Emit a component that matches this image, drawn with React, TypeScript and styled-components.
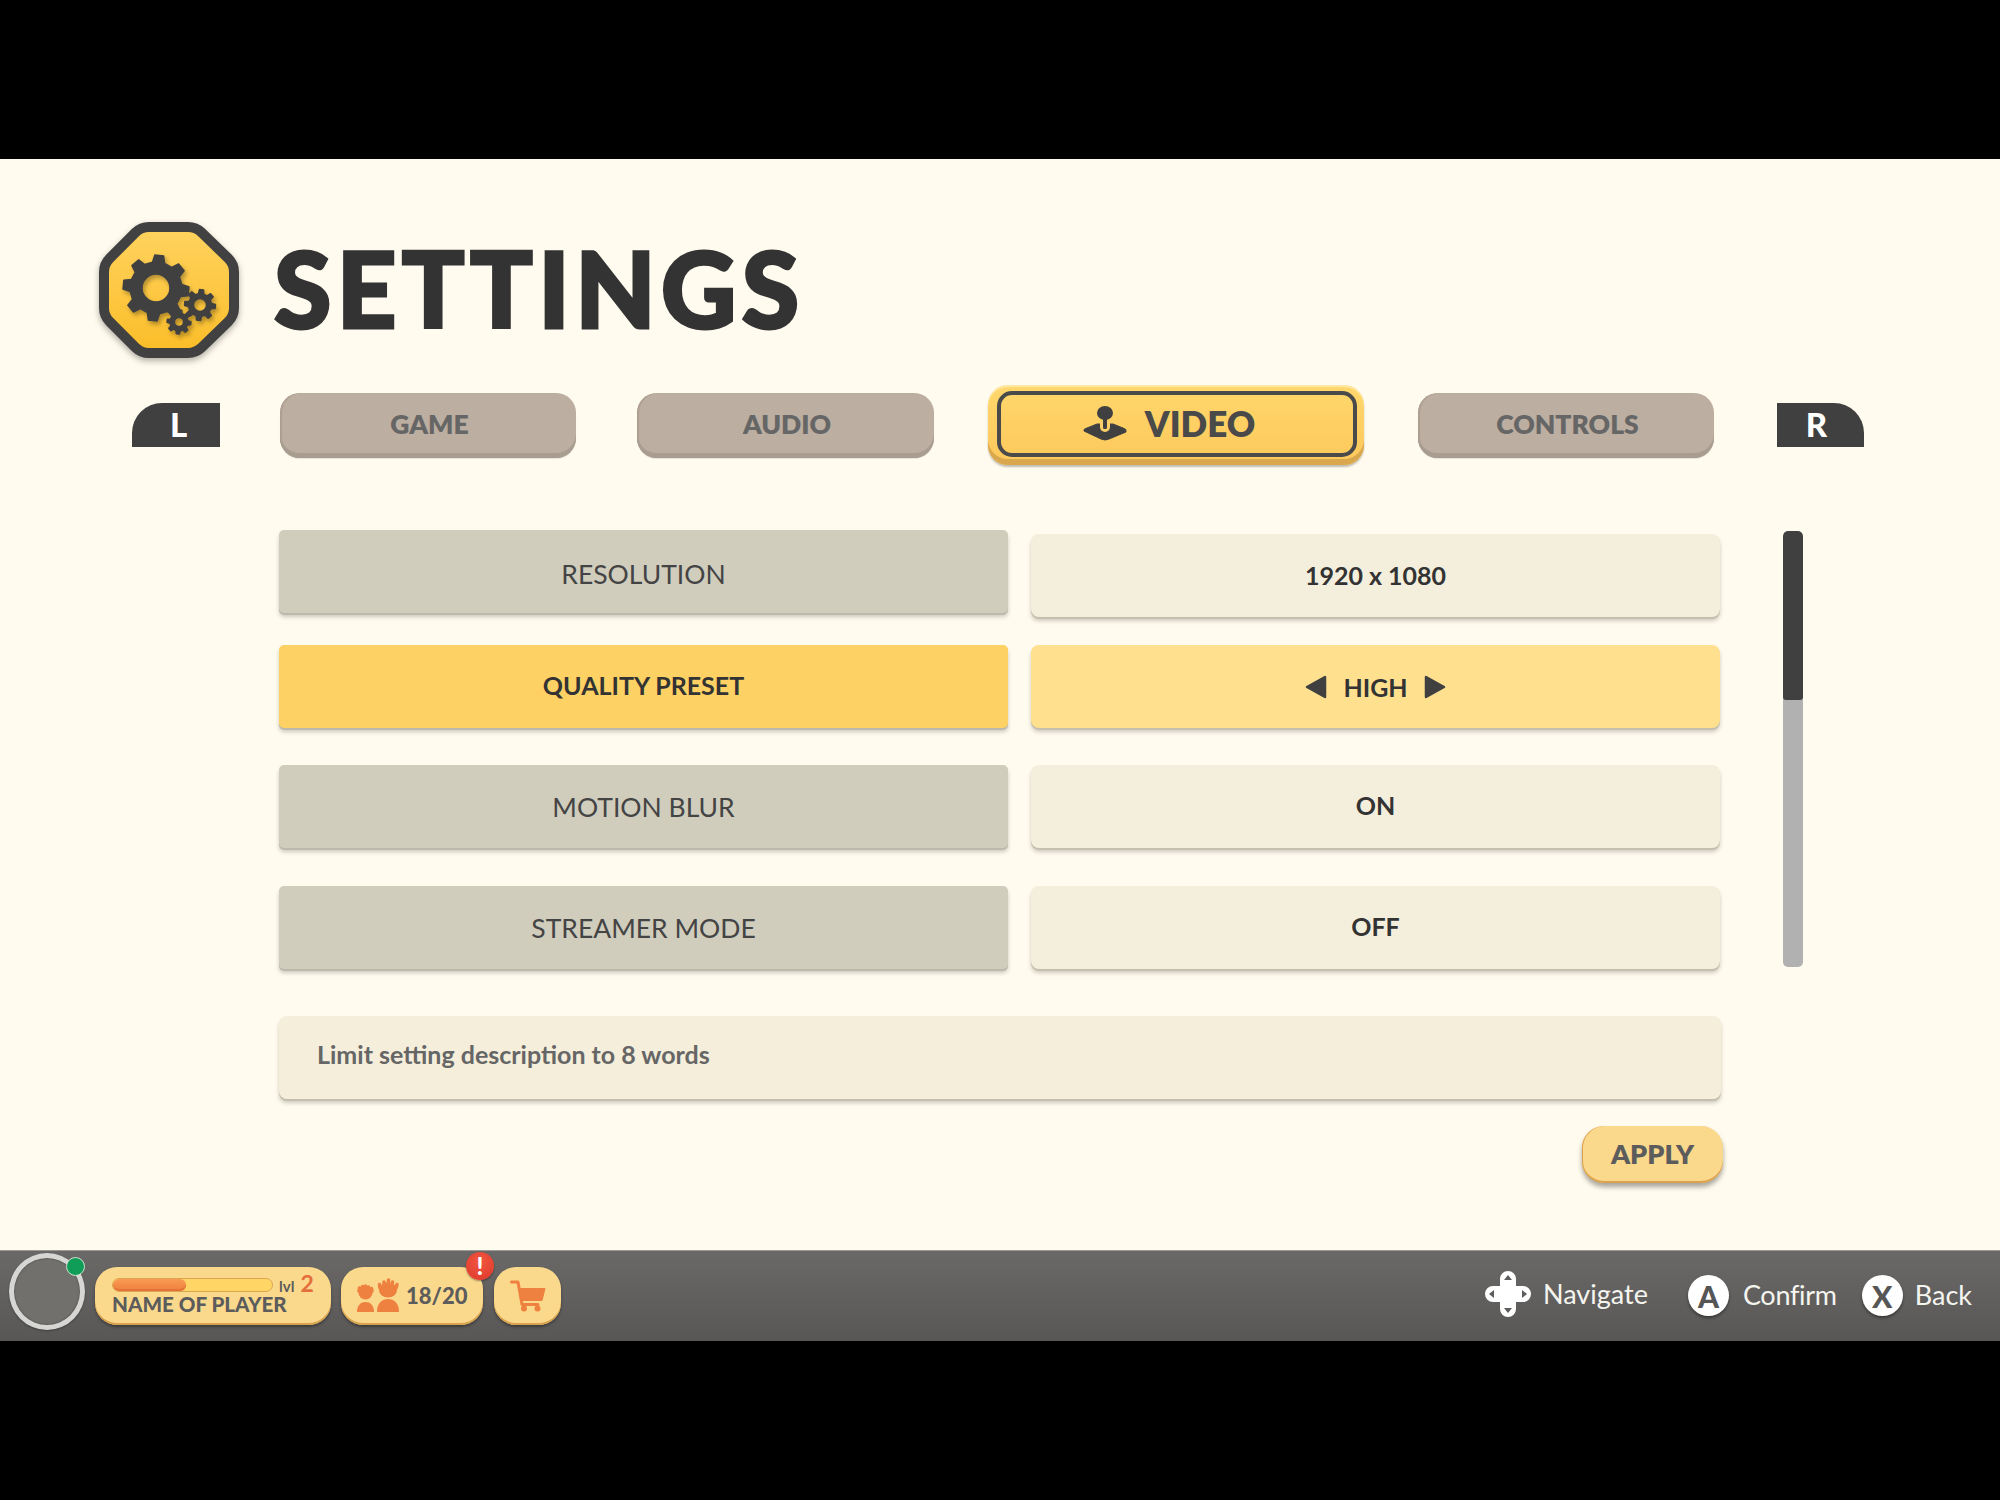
import React from "react";
import styled, { createGlobalStyle } from "styled-components";

const Global = createGlobalStyle`
  html, body { margin: 0; padding: 0; background: #000; }
  body { font-family: "Lato", "Noto Sans", sans-serif; }
  #root { width: 2000px; height: 1500px; }
`;

const Page = styled.div`
  width: 2000px;
  height: 1500px;
  padding-top: 159px;
  box-sizing: border-box;
  background: #000;
`;
const Screen = styled.div`
  width: 2000px;
  height: 1182px;
  background: #fffbee;
  display: flex;
  flex-direction: column;
`;
const Main = styled.main`
  flex: 1;
  display: flex;
  flex-direction: column;
`;
const Header = styled.header`
  display: flex;
  align-items: center;
  height: 136px;
  margin-top: 63px;
  padding-left: 98px;
  gap: 35px;
`;
const LogoSvg = styled.svg`
  width: 141px;
  height: 136px;
  overflow: visible;
  filter: drop-shadow(0 3px 3px rgba(0, 0, 0, 0.3));
`;
const Title = styled.h1`
  margin: 0 0 5px;
  font-size: 104px;
  line-height: 1;
  font-weight: 900;
  color: #333;
  letter-spacing: 5.4px;
  -webkit-text-stroke: 3px #333;
`;
const TabsRow = styled.nav`
  display: flex;
  align-items: center;
  height: 80px;
  margin-top: 27px;
  padding-left: 132px;
`;
const Bumper = styled.div<{ $side: "l" | "r"; $offset?: number }>`
  width: ${(p) => (p.$side === "l" ? 88 : 87)}px;
  height: 44px;
  margin-left: ${(p) => p.$offset ?? 0}px;
  background: #404040;
  color: #fff;
  display: flex;
  align-items: center;
  justify-content: center;
  font-size: 33px;
  font-weight: 900;
  border-top-left-radius: ${(p) => (p.$side === "l" ? 30 : 0)}px;
  border-top-right-radius: ${(p) => (p.$side === "r" ? 30 : 0)}px;
  padding: ${(p) => (p.$side === "l" ? "0 0 2px 5px" : "0 8px 2px 0")};
  box-sizing: border-box;
`;
const Tab = styled.button<{ $w: number; $offset: number }>`
  width: ${(p) => p.$w}px;
  height: 65px;
  margin-left: ${(p) => p.$offset}px;
  border: none;
  border-radius: 20px;
  background: #bcaea0;
  box-shadow: inset 0 -5px 0 #a89d90, inset 2px 0 1px #ad9f92, 0 1px 1px rgba(0, 0, 0, 0.1);
  color: #666;
  font-family: inherit;
  font-size: 26.5px;
  font-weight: 800;
  padding: 0 0 2px 3px;
`;
const ActiveTab = styled.button<{ $offset: number }>`
  width: 376px;
  height: 80px;
  margin-left: ${(p) => p.$offset}px;
  padding: 6px 7px 8px 9px;
  box-sizing: border-box;
  border: none;
  border-radius: 20px;
  background: linear-gradient(#ffd76c, #fdc85b);
  box-shadow: inset 0 -6px 0 #d9a84e, inset 0 2px 1px #ffe9a8, 0 2px 2px rgba(0, 0, 0, 0.25);
  font-family: inherit;
`;
const ActiveInner = styled.span`
  display: flex;
  align-items: center;
  justify-content: center;
  gap: 18px;
  height: 100%;
  box-sizing: border-box;
  border: 4px solid #4a4a4a;
  border-radius: 15px;
  color: #4a4a4a;
  font-size: 35px;
  font-weight: 800;
  padding: 0 16px 2px 0;
`;
const Body = styled.section`
  display: flex;
  align-items: flex-start;
  margin-top: 65px;
  padding-left: 279px;
`;
const Table = styled.div`
  width: 1444px;
  display: flex;
  flex-direction: column;
`;
const Row = styled.div<{ $mt: number }>`
  display: grid;
  grid-template-columns: 729px 689px;
  grid-template-rows: 83px;
  align-items: start;
  column-gap: 23px;
  height: 83px;
  margin-top: ${(p) => p.$mt}px;
`;
const Label = styled.div<{ $on?: boolean; $pt: number }>`
  display: flex;
  align-items: center;
  justify-content: center;
  height: 83px;
  border-radius: 5px;
  background: ${(p) => (p.$on ? "#fdd163" : "#d0cdbd")};
  color: ${(p) => (p.$on ? "#333" : "#444")};
  font-size: ${(p) => (p.$on ? 25 : 26.5)}px;
  font-weight: ${(p) => (p.$on ? 700 : 400)};
  padding-top: ${(p) => p.$pt}px;
  padding-bottom: ${(p) => (p.$on ? 3 : 0)}px;
  box-sizing: border-box;
  box-shadow: 0 2px 0 #bdbaac, 0 4px 4px rgba(0, 0, 0, 0.2);
`;
const Value = styled.div<{ $on?: boolean; $top?: number; $pb: number }>`
  display: flex;
  align-items: center;
  justify-content: center;
  gap: 16px;
  height: 83px;
  box-sizing: border-box;
  margin-top: ${(p) => p.$top ?? 0}px;
  padding-bottom: ${(p) => p.$pb}px;
  border-radius: 8px;
  background: ${(p) => (p.$on ? "#ffe08f" : "#f4efdc")};
  color: #333;
  font-size: 25px;
  font-weight: 700;
  box-shadow: 0 2px 0 #c4bfae, 0 4px 4px rgba(0, 0, 0, 0.2);
`;
const Description = styled.div`
  height: 83px;
  margin-top: 47px;
  width: 1442px;
  display: flex;
  align-items: center;
  padding: 0 0 7px 38px;
  box-sizing: border-box;
  border-radius: 8px;
  background: #f4eedb;
  color: #666;
  font-size: 25px;
  font-weight: 700;
  box-shadow: 0 2px 0 #c4bfae, 0 4px 4px rgba(0, 0, 0, 0.2);
`;
const Apply = styled.button`
  align-self: flex-end;
  width: 141px;
  height: 57px;
  margin-top: 27px;
  border: none;
  border-radius: 22px;
  background: #fbd98c;
  box-shadow: inset 0 -2px 0 #dfa24c, inset 1px 0 0 #dfa24c, 0 4px 5px rgba(0, 0, 0, 0.35);
  color: #5c5c5c;
  font-family: inherit;
  font-size: 27px;
  font-weight: 800;
  padding: 0 0 2px;
`;
const ScrollTrack = styled.div`
  width: 20px;
  height: 436px;
  margin: 1px 0 0 60px;
  border-radius: 5px;
  background: #b1b1b1;
  overflow: hidden;
`;
const ScrollThumb = styled.div`
  height: 169px;
  background: #404040;
  border-radius: 5px 5px 3px 3px;
`;
const Bar = styled.footer`
  height: 91px;
  box-sizing: border-box;
  display: flex;
  align-items: center;
  padding: 0 28px 0 9px;
  background: linear-gradient(#6a6967, #585756);
  box-shadow: inset 0 1px 0 #9a9994;
`;
const Avatar = styled.div`
  position: relative;
  width: 76px;
  height: 77px;
  box-sizing: border-box;
  border: 5px solid #d6d6d4;
  border-radius: 50%;
  background: #72706c;
  box-shadow: inset 0 0 2px rgba(0, 0, 0, 0.5), 0 1px 2px rgba(0, 0, 0, 0.3);
  margin: 0 10px 8px 0;
`;
const Online = styled.span`
  position: absolute;
  top: -1px;
  right: -5px;
  width: 17px;
  height: 17px;
  border: 1px solid #cfe0d0;
  border-radius: 50%;
  background: #0f9d58;
`;
const Pill = styled.div<{ $w: number; $ml?: number }>`
  position: relative;
  width: ${(p) => p.$w}px;
  height: 58px;
  margin-left: ${(p) => p.$ml ?? 0}px;
  box-sizing: border-box;
  border-radius: 22px;
  background: #fbd98c;
  box-shadow: inset 0 -2px 0 #d8a24e, 0 2px 3px rgba(0, 0, 0, 0.35);
  color: #5c5c5c;
  display: flex;
  align-items: center;
`;
const PlayerPill = styled(Pill)`
  flex-direction: column;
  align-items: flex-start;
  padding: 9px 0 0 17px;
`;
const PlayerTop = styled.div`
  display: flex;
  align-items: flex-start;
  height: 19px;
`;
const Progress = styled.div`
  width: 161px;
  height: 14px;
  margin-top: 2px;
  box-sizing: border-box;
  border-radius: 7px;
  border: 1px solid #d9a64f;
  background: #ffd666;
  overflow: hidden;
`;
const ProgressFill = styled.div`
  height: 100%;
  border-radius: 6px;
  background: linear-gradient(#f99a55, #ee7f3c);
  box-shadow: inset 0 -2px 0 #e4713a;
`;
const Lvl = styled.span`
  margin-left: 6px;
  margin-top: 1px;
  font-size: 15px;
  line-height: 18px;
  font-weight: 700;
  color: #5c5c5c;
`;
const LvlNum = styled.span`
  margin-left: 6px;
  margin-top: -5px;
  font-size: 23px;
  line-height: 24px;
  font-weight: 700;
  color: #e46f3d;
`;
const PlayerName = styled.div`
  margin-top: -3px;
  font-size: 20.6px;
  line-height: 24px;
  font-weight: 900;
  white-space: nowrap;
`;
const FriendsPill = styled(Pill)`
  padding-left: 15px;
`;
const CartPill = styled(Pill)`
  justify-content: center;
`;
const Count = styled.span`
  margin-left: 6px;
  font-size: 22px;
  font-weight: 900;
`;
const Alert = styled.span`
  position: absolute;
  top: -15px;
  right: -11px;
  width: 28px;
  height: 28px;
  border-radius: 50%;
  background: radial-gradient(circle at 50% 35%, #f2573f, #dc372c);
  color: #fff;
  font-size: 24px;
  font-weight: 900;
  display: flex;
  align-items: center;
  justify-content: center;
  box-shadow: 0 1px 2px rgba(0, 0, 0, 0.4);
`;
const Hints = styled.div`
  margin-left: auto;
  display: flex;
  align-items: center;
  color: #f5f5f0;
  font-size: 27px;
  font-weight: 400;
`;
const Hint = styled.div<{ $ml: number; $gap: number }>`
  display: flex;
  align-items: center;
  margin-left: ${(p) => p.$ml}px;
  gap: ${(p) => p.$gap}px;
`;
const Round = styled.span`
  width: 41px;
  height: 41px;
  border-radius: 50%;
  background: #fff;
  color: #565656;
  font-size: 30px;
  font-weight: 900;
  display: flex;
  align-items: center;
  justify-content: center;
  box-shadow: 0 2px 3px rgba(0, 0, 0, 0.4);
`;
const HintText = styled.span<{ $up: number; $track?: number }>`
  margin-top: ${(p) => -p.$up}px;
  letter-spacing: ${(p) => p.$track ?? 0}px;
`;
const DPadSvg = styled.svg`
  margin-top: -3px;
`;

function gearPath(cx: number, cy: number, n: number, ro: number, rr: number, hole: number) {
  const pts: string[] = [];
  const step = (Math.PI * 2) / n;
  for (let i = 0; i < n; i++) {
    const a = i * step - Math.PI / 2 + 0.1;
    const list: [number, number][] = [
      [rr, a - step * 0.3],
      [ro, a - step * 0.17],
      [ro, a + step * 0.17],
      [rr, a + step * 0.3],
    ];
    list.forEach(([r, t]) => pts.push(`${(cx + r * Math.cos(t)).toFixed(2)} ${(cy + r * Math.sin(t)).toFixed(2)}`));
  }
  return `M${pts.join("L")}Z M${cx + hole} ${cy}a${hole} ${hole} 0 1 0 ${-hole * 2} 0a${hole} ${hole} 0 1 0 ${hole * 2} 0Z`;
}

function roundedPoly(points: [number, number][], r: number) {
  const n = points.length;
  let d = "";
  points.forEach((p, i) => {
    const prev = points[(i + n - 1) % n];
    const next = points[(i + 1) % n];
    const toward = (q: [number, number]) => {
      const dx = q[0] - p[0];
      const dy = q[1] - p[1];
      const len = Math.hypot(dx, dy);
      return [p[0] + (dx / len) * r, p[1] + (dy / len) * r];
    };
    const a = toward(prev);
    const b = toward(next);
    d += `${i === 0 ? "M" : "L"}${a[0].toFixed(2)} ${a[1].toFixed(2)}Q${p[0]} ${p[1]} ${b[0].toFixed(2)} ${b[1].toFixed(2)}`;
  });
  return d + "Z";
}

const octagon: [number, number][] = [
  [43, 5], [98, 5], [136, 42], [136, 94], [98, 131], [43, 131], [6, 94], [6, 42],
];

const Logo = () => (
  <LogoSvg viewBox="0 0 141 136">
    <defs>
      <linearGradient id="lg" x1="0" y1="0" x2="0" y2="1">
        <stop offset="0" stopColor="#ffd35f" />
        <stop offset="1" stopColor="#fbbd28" />
      </linearGradient>
      <filter id="gs" x="-20%" y="-20%" width="150%" height="150%">
        <feDropShadow dx="2" dy="3" stdDeviation="2" floodColor="#000" floodOpacity="0.3" />
      </filter>
    </defs>
    <path d={roundedPoly(octagon, 8)} fill="url(#lg)" stroke="#414141" strokeWidth="10" />
    <g fill="#404040" stroke="#404040" strokeWidth="1.5" strokeLinejoin="round" fillRule="evenodd" filter="url(#gs)">
      <path d={gearPath(58, 66, 8, 33, 26, 14)} />
      <path d={gearPath(102, 83, 8, 15.5, 11.5, 6.5)} />
      <path d={gearPath(81, 100, 8, 12, 9, 4.5)} />
    </g>
  </LogoSvg>
);

const Joystick = () => (
  <svg width="44" height="35" viewBox="0 0 44 35">
    <path
      d="M1 25 Q0 23 4 22 L14 18 L30 18 L40 22 Q44 23 43 26 L26 33 Q22 35 18 33Z"
      fill="#404040"
      stroke="#404040"
      strokeLinejoin="round"
    />
    <rect x="17" y="12" width="10" height="14" rx="5" fill="#fdd067" />
    <rect x="20" y="8" width="4" height="15" rx="1.5" fill="#404040" />
    <ellipse cx="22" cy="7" rx="8" ry="7" fill="#404040" />
  </svg>
);

const Arrow = ({ dir }: { dir: "l" | "r" }) => (
  <svg width="22" height="24" viewBox="0 0 22 24">
    <polygon
      points={dir === "l" ? "20,2 20,22 2,12" : "2,2 2,22 20,12"}
      fill="#404040"
      stroke="#404040"
      strokeWidth="2.5"
      strokeLinejoin="round"
    />
  </svg>
);

const Friends = () => (
  <svg width="44" height="35" viewBox="0 0 44 35">
    <g fill="#ee8040">
      <path d="M1 34 C1 27 5 24 9.5 24 C14 24 18 27 18 34Z" />
      <path d="M21 34 C21 25 26 21 32 21 C38 21 43 25 43 34Z" />
      <ellipse cx="9.5" cy="15" rx="7" ry="6.5" />
      <ellipse cx="32" cy="12" rx="9" ry="7.5" />
    </g>
    <g stroke="#ee8040" strokeWidth="3.5" strokeLinecap="round">
      <path d="M3 13 L3.5 10 M6.5 12 L6.5 8.5 M9.5 12 L9.5 8 M12.5 12 L12.5 9 M16 13 L15.5 10.5" />
      <path d="M24 10 L23.5 6.5 M28 8 L28 4 M32 8 L32.5 2 M36 8 L36.5 4 M40 10 L41 6.5" />
    </g>
  </svg>
);

const Cart = () => (
  <svg width="36" height="32" viewBox="0 0 36 32">
    <path d="M1.5 2 H8 L12 24.5 H28" fill="none" stroke="#ee8040" strokeWidth="3" strokeLinecap="round" strokeLinejoin="round" />
    <path d="M9 8.5 H35 L32 20.5 H11.5Z" fill="#ee8040" stroke="#ee8040" strokeLinejoin="round" />
    <circle cx="14" cy="28.5" r="3" fill="#ee8040" />
    <circle cx="27.5" cy="28.5" r="3" fill="#ee8040" />
  </svg>
);

const DPad = () => (
  <DPadSvg width="46" height="46" viewBox="0 0 46 46">
    <path
      d="M15 8 a8 8 0 0 1 16 0 V15 H38 a8 8 0 0 1 0 16 H31 V38 a8 8 0 0 1 -16 0 V31 H8 a8 8 0 0 1 0 -16 H15Z"
      fill="#fff"
    />
    <g fill="#5c5c5c">
      <polygon points="23,4 27,9 19,9" />
      <polygon points="23,42 27,37 19,37" />
      <polygon points="4,23 9,19 9,27" />
      <polygon points="42,23 37,19 37,27" />
    </g>
  </DPadSvg>
);

const rows = [
  { mt: 0, label: "RESOLUTION", value: "1920 x 1080", top: 4, pt: 4, pb: 1 },
  { mt: 32, label: "QUALITY PRESET", value: "HIGH", on: true, pt: 0, pb: 0 },
  { mt: 37, label: "MOTION BLUR", value: "ON", pt: 0, pb: 3 },
  { mt: 38, label: "STREAMER MODE", value: "OFF", pt: 0, pb: 3 },
];

export default function App() {
  return (
    <Page>
      <Global />
      <Screen>
        <Main>
          <Header>
            <Logo />
            <Title>SETTINGS</Title>
          </Header>
          <TabsRow>
            <Bumper $side="l">L</Bumper>
            <Tab $w={296} $offset={60}>GAME</Tab>
            <Tab $w={297} $offset={61}>AUDIO</Tab>
            <ActiveTab $offset={54}>
              <ActiveInner>
                <Joystick />
                VIDEO
              </ActiveInner>
            </ActiveTab>
            <Tab $w={296} $offset={54}>CONTROLS</Tab>
            <Bumper $side="r" $offset={63}>R</Bumper>
          </TabsRow>
          <Body>
            <Table>
              {rows.map((r) => (
                <Row key={r.label} $mt={r.mt}>
                  <Label $on={r.on} $pt={r.pt}>{r.label}</Label>
                  <Value $on={r.on} $top={r.top} $pb={r.pb}>
                    {r.on && <Arrow dir="l" />}
                    {r.value}
                    {r.on && <Arrow dir="r" />}
                  </Value>
                </Row>
              ))}
              <Description>Limit setting description to 8 words</Description>
              <Apply>APPLY</Apply>
            </Table>
            <ScrollTrack>
              <ScrollThumb />
            </ScrollTrack>
          </Body>
        </Main>
        <Bar>
          <Avatar>
            <Online />
          </Avatar>
          <PlayerPill $w={236}>
            <PlayerTop>
              <Progress>
                <ProgressFill style={{ width: `${(73 / 160) * 100}%` }} />
              </Progress>
              <Lvl>lvl</Lvl>
              <LvlNum>2</LvlNum>
            </PlayerTop>
            <PlayerName>NAME OF PLAYER</PlayerName>
          </PlayerPill>
          <FriendsPill $w={142} $ml={10}>
            <Friends />
            <Count>18/20</Count>
            <Alert>!</Alert>
          </FriendsPill>
          <CartPill $w={67} $ml={11}>
            <Cart />
          </CartPill>
          <Hints>
            <Hint $ml={0} $gap={12}>
              <DPad />
              <HintText $up={5}>Navigate</HintText>
            </Hint>
            <Hint $ml={40} $gap={14}>
              <Round>A</Round>
              <HintText $up={2} $track={-0.3}>Confirm</HintText>
            </Hint>
            <Hint $ml={25} $gap={12}>
              <Round>X</Round>
              <HintText $up={2}>Back</HintText>
            </Hint>
          </Hints>
        </Bar>
      </Screen>
    </Page>
  );
}
